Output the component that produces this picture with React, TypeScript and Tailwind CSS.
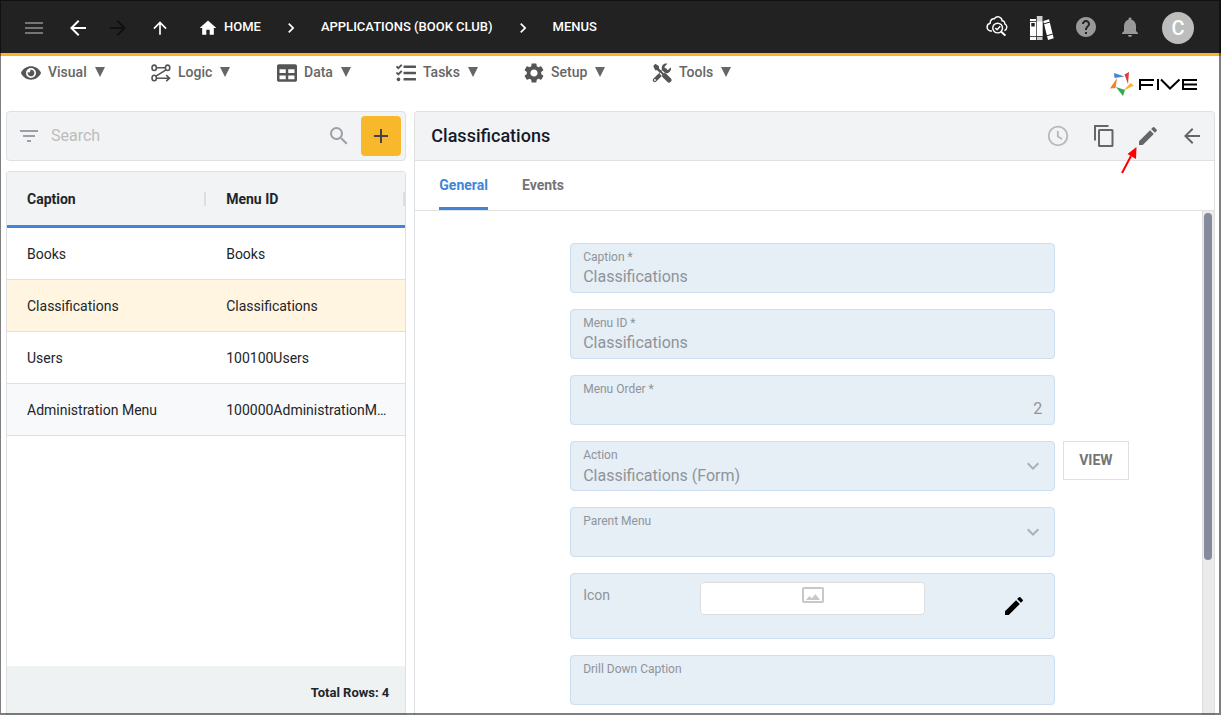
import React, { useState } from "react";
import {
  MdAdd,
  MdArrowBack,
  MdArrowForward,
  MdArrowUpward,
  MdChevronRight,
  MdEdit,
  MdFilterList,
  MdHelp,
  MdHome,
  MdKeyboardArrowDown,
  MdMenu,
  MdNotifications,
  MdSearch,
  MdSettings,
} from "react-icons/md";
import { FaEye, FaTable, FaTasks } from "react-icons/fa";

interface MenuRow {
  caption: string;
  menuId: string;
}

const ROWS: MenuRow[] = [
  { caption: "Books", menuId: "Books" },
  { caption: "Classifications", menuId: "Classifications" },
  { caption: "Users", menuId: "100100Users" },
  { caption: "Administration Menu", menuId: "100000AdministrationMenu" },
];

const MENUS = [
  { label: "Visual", icon: <FaEye className="size-5" />, width: "w-[130px]" },
  { label: "Logic", icon: <LogicIcon />, width: "w-[126px]" },
  { label: "Data", icon: <FaTable className="size-5" />, width: "w-[119px]" },
  { label: "Tasks", icon: <FaTasks className="size-5" />, width: "w-[128px]" },
  { label: "Setup", icon: <MdSettings className="size-6 shrink-0" />, width: "w-[128px]" },
  { label: "Tools", icon: <ToolsIcon />, width: "w-[128px]" },
];

export default function App() {
  return (
    <div className="relative flex h-screen flex-col overflow-hidden bg-white font-[Roboto,sans-serif] text-sm text-[#212529]">
      <TopBar />
      <MenuBar />
      <main className="grid min-h-0 flex-1 grid-cols-[minmax(0,1fr)_minmax(0,2fr)] gap-2 px-1.5">
        <ListPanel />
        <DetailPanel />
      </main>
      <div className="pointer-events-none absolute inset-0 border-t border-r-2 border-b-2 border-l border-black/50" />
    </div>
  );
}

function TopBar() {
  return (
    <header className="flex h-14 shrink-0 items-center justify-between border-b-3 border-[#fbb429] bg-[#222222] pt-0.5 pr-[27px] pl-[22px] text-white">
      <div className="flex items-center">
        <button aria-label="Menu" className="mr-5 text-[#757575]">
          <MdMenu className="size-6" />
        </button>
        <button aria-label="Back" className="mr-4">
          <MdArrowBack className="size-6" />
        </button>
        <button aria-label="Forward" disabled className="mr-5 text-[#111111]">
          <MdArrowForward className="size-6" />
        </button>
        <button aria-label="Up" className="mr-7">
          <MdArrowUpward className="size-5" />
        </button>
        <nav aria-label="Breadcrumb" className="flex items-center text-[13px] font-medium">
          <a href="#home" className="flex items-center gap-1.5">
            <MdHome className="size-5" />
            HOME
          </a>
          <MdChevronRight className="mx-5 size-5" />
          <a href="#applications">APPLICATIONS (BOOK CLUB)</a>
          <MdChevronRight className="mx-5 size-5" />
          <a href="#menus">MENUS</a>
        </nav>
      </div>
      <div className="flex items-center">
        <button aria-label="Inspect cloud" className="mr-5 pb-1">
          <CloudSearchIcon />
        </button>
        <button aria-label="Library" className="mr-5">
          <BooksIcon />
        </button>
        <button aria-label="Help" className="mr-5 pb-0.5 text-[#999999]">
          <MdHelp className="size-6" />
        </button>
        <button aria-label="Notifications" className="mr-5 pb-0.5 text-[#999999]">
          <MdNotifications className="size-6" />
        </button>
        <button className="flex size-8 items-center justify-center rounded-full bg-[#bdbdbd] text-xl font-medium text-white">
          C
        </button>
      </div>
    </header>
  );
}

function MenuBar() {
  return (
    <div className="flex h-[55px] shrink-0 items-start justify-between pr-[23px] pl-[21px]">
      <nav className="flex text-[#666666]">
        {MENUS.map((menu) => (
          <button key={menu.label} className={`flex h-8 items-center gap-[7px] font-medium ${menu.width}`}>
            <span className="flex w-5 shrink-0 justify-center pt-0.5 text-[#555555]">{menu.icon}</span>
            <span className="flex items-center gap-2">
              {menu.label}
              <svg viewBox="0 0 10 10" className="size-2.5 fill-current">
                <path d="M0 0h10L5 10z" />
              </svg>
            </span>
          </button>
        ))}
      </nav>
      <FiveLogo />
    </div>
  );
}

function ListPanel() {
  const [selected, setSelected] = useState("Classifications");

  return (
    <section className="flex min-h-0 flex-col gap-2.5">
      <div className="flex h-[50px] shrink-0 items-center rounded border border-[#dee0e2] bg-[#f1f3f4] pr-1 pl-2.5">
        <button aria-label="Filter" className="text-[#9aa0a6]">
          <MdFilterList className="size-6" />
        </button>
        <input
          type="text"
          aria-label="Search"
          placeholder="Search"
          className="ml-2.5 min-w-0 flex-1 bg-transparent text-base outline-none placeholder:text-[#bdbdbd]"
        />
        <MdSearch className="mr-2.5 size-6 text-[#9aa0a6]" />
        <button
          aria-label="Add"
          className="flex size-10 items-center justify-center rounded bg-[#f8b82b] text-[#444444]"
        >
          <MdAdd className="size-6" />
        </button>
      </div>

      <div className="flex min-h-0 flex-1 flex-col justify-between overflow-hidden rounded-t border border-b-0 border-[#dee0e2]">
        <table className="w-full table-fixed border-separate border-spacing-0 text-left">
          <thead>
            <tr className="bg-[#f1f3f4]">
              <HeaderCell>Caption</HeaderCell>
              <HeaderCell>Menu ID</HeaderCell>
            </tr>
          </thead>
          <tbody>
            {ROWS.map((row, i) => (
              <tr
                key={row.menuId}
                onClick={() => setSelected(row.caption)}
                className={`cursor-pointer ${
                  row.caption === selected ? "bg-[#fff5e1]" : i % 2 ? "bg-[#f8f9fa]" : "bg-white"
                }`}
              >
                <td className="h-[52px] truncate border-b border-[#e0e0e0] px-5">{row.caption}</td>
                <td className="h-[52px] truncate border-b border-[#e0e0e0] pr-3 pl-5">{row.menuId}</td>
              </tr>
            ))}
          </tbody>
        </table>
        <footer className="h-[49px] shrink-0 bg-[#eef2f3] px-4 pt-[17px] text-right text-[13px] leading-5 font-bold">
          Total Rows: 4
        </footer>
      </div>
    </section>
  );
}

function HeaderCell({ children }: { children: React.ReactNode }) {
  return (
    <th className="h-14 border-b-3 border-[#4285d8] pl-5 font-bold">
      <div className="flex items-center justify-between">
        {children}
        <span className="h-3.5 w-0.5 bg-[#dcdee0]" />
      </div>
    </th>
  );
}

function DetailPanel() {
  return (
    <section className="flex min-h-0 flex-col rounded-t border border-b-0 border-[#dee0e2]">
      <div className="flex h-[49px] shrink-0 items-center justify-between rounded-t border-b border-[#dee0e2] bg-[#f1f3f4] pr-2.5 pl-4">
        <h1 className="text-lg font-medium text-[#14192b]">Classifications</h1>
        <div className="flex items-center gap-5 text-[#666666]">
          <button aria-label="History" disabled className="pr-0.5 text-[#b5b8ba]">
            <ClockIcon />
          </button>
          <button aria-label="Copy">
            <CopyIcon />
          </button>
          <button aria-label="Edit" className="relative">
            <MdEdit className="size-6" />
            <PointerArrow />
          </button>
          <button aria-label="Close">
            <MdArrowBack className="size-6" />
          </button>
        </div>
      </div>

      <div
        role="tablist"
        className="flex h-[50px] shrink-0 gap-[34px] border-b border-[#dee0e2] px-6 font-bold"
      >
        <button
          role="tab"
          aria-selected="true"
          className="rounded-t-xs border-b-3 border-[#4285d8] pt-0.5 text-[#4285d8]"
        >
          General
        </button>
        <button role="tab" aria-selected="false" className="border-b-3 border-transparent pt-0.5 text-[#757575]">
          Events
        </button>
      </div>

      <div className="flex min-h-0 flex-1">
        <form className="grid flex-1 grid-cols-[155fr_485fr_147fr] content-start gap-y-4 overflow-hidden pt-8 text-[#8f9499]">
          <TextField id="caption" label="Caption *" value="Classifications" />
          <TextField id="menu-id" label="Menu ID *" value="Classifications" />
          <TextField id="menu-order" label="Menu Order *" value="2" alignRight />
          <SelectField id="action" label="Action" value="Classifications (Form)" />
          <div className="pl-2">
            <button
              type="button"
              className="h-[39px] border border-[#dee0e2] px-[15px] pb-0.5 font-bold text-[#757575]"
            >
              VIEW
            </button>
          </div>
          <SelectField id="parent-menu" label="Parent Menu" value="" />
          <div className="col-start-2 flex h-[66px] justify-between rounded border border-[#cbdff1] bg-[#e6eef6] px-3">
            <span className="w-[117px] pt-[11px]">Icon</span>
            <div className="mt-2 flex h-[33px] w-[225px] justify-center rounded border border-[#dedede] bg-white pt-1 text-[#c8c8c8]">
              <ImageIcon />
            </div>
            <div className="flex w-[117px] items-center justify-end pr-4">
              <button type="button" aria-label="Edit icon" className="text-black">
                <MdEdit className="size-6" />
              </button>
            </div>
          </div>
          <TextField id="drill-down" label="Drill Down Caption" value="" />
        </form>
        <div aria-hidden="true" className="w-3 shrink-0 border-l border-[#dcdcdc] bg-[#ebebeb] pt-0.5 pl-px">
          <div className="h-[347px] w-2 rounded-full bg-[#858a9c]" />
        </div>
      </div>
    </section>
  );
}

interface FieldProps {
  id: string;
  label: string;
  value: string;
  alignRight?: boolean;
}

function TextField({ id, label, value, alignRight }: FieldProps) {
  return (
    <div className="col-start-2 flex h-[50px] flex-col rounded border border-[#cbdff1] bg-[#e6eef6] px-3 pt-[5px]">
      <label htmlFor={id} className="text-xs leading-4">
        {label}
      </label>
      <input
        id={id}
        readOnly
        defaultValue={value}
        className={`h-6 w-full bg-transparent text-base outline-none ${alignRight ? "text-right" : ""}`}
      />
    </div>
  );
}

function SelectField({ id, label, value }: FieldProps) {
  return (
    <div className="relative col-start-2 flex h-[50px] flex-col rounded border border-[#cbdff1] bg-[#e6eef6] px-3 pt-[5px]">
      <label htmlFor={id} className="text-xs leading-4">
        {label}
      </label>
      <select
        id={id}
        disabled
        defaultValue={value}
        className="h-[26px] w-full appearance-none bg-transparent text-base opacity-100 outline-none"
      >
        <option value={value}>{value}</option>
      </select>
      <MdKeyboardArrowDown className="absolute top-3 right-[9px] size-6 text-[#a9b0b8]" />
    </div>
  );
}

function PointerArrow() {
  return (
    <svg viewBox="0 0 18 28" className="pointer-events-none absolute top-[22px] -left-[17px] h-7 w-[18px]">
      <path d="M3 27L12 10" stroke="#ff0000" strokeWidth="2" />
      <path d="M17.500 1L17 13L8.500 8z" fill="#ff0000" />
    </svg>
  );
}

function LogicIcon() {
  return (
    <svg viewBox="0 0 20 18" className="h-[18px] w-5 shrink-0 fill-none stroke-current" strokeWidth="1.600">
      <ellipse cx="3.200" cy="3.800" rx="2.200" ry="2.700" />
      <ellipse cx="16.600" cy="3.800" rx="2.200" ry="2.700" />
      <ellipse cx="3.200" cy="14" rx="2.200" ry="2.700" />
      <path d="M5.400 3.800h9M15 5.800L5 12.200M5.400 14.200h12.600M15.200 11.200l3.300 3-3.300 3" />
    </svg>
  );
}

function ToolsIcon() {
  return (
    <svg viewBox="0 0 20 20" className="size-5 shrink-0">
      <path
        d="M2.800 17.200L13 7"
        className="fill-none stroke-current"
        strokeWidth="4"
        strokeLinecap="round"
      />
      <path
        d="M18.900 4.300l-3 2.700-2.700-.6-.7-2.600L15.400.8C12.600 0 9.600 2 9.700 5.500c.1 3.300 3.400 5.400 6.300 4.400 2.400-.9 3.500-3.300 2.900-5.600z"
        className="fill-current"
      />
      <path d="M1.200 3L3.400.8 7 3.200v2.200l3.600 3.600-1.800 1.800-3.600-3.600H3.200z" className="fill-current" />
      <path d="M9 9l3.500 3.500" className="stroke-white" strokeWidth="4.500" />
      <path d="M8.500 8.500l3.500 3.500" className="stroke-current" strokeWidth="1.800" />
      <path d="M12.700 12.700l4.300 4.300" className="stroke-current" strokeWidth="5" strokeLinecap="round" />
      <circle cx="3" cy="17" r="0.900" fill="#ffffff" />
    </svg>
  );
}

function CloudSearchIcon() {
  return (
    <svg viewBox="0 0 24 24" className="size-[22px] fill-none stroke-current" strokeWidth="1.600">
      <path d="M6.500 17.500H5.200A4.200 4.200 0 0 1 1.200 13.200c0-2.200 1.400-3.700 3.300-4.200C4.600 5.300 6.800 3.800 9 4.200 10.200 2 12.200 1.500 14 2c2.200.6 3.400 2.300 3.600 4.200 2 .1 3 1.500 2.900 3.400 1.500.7 2.300 2 2.200 3.800-.1 1.700-1 3-2.600 3.700" />
      <circle cx="12.700" cy="14.200" r="5.300" />
      <path d="M10.200 14.200l1.900 1.900 3.400-3.700" />
      <path d="M16.600 18.200l4.600 4.300" strokeWidth="2.200" />
    </svg>
  );
}

function BooksIcon() {
  return (
    <svg viewBox="0 0 26 26" className="size-[26px]">
      <path d="M2 4h6v21H2z" fill="#ffffff" />
      <path d="M3.300 8h3.400v3.500H3.300z" fill="#222222" />
      <path d="M2 6.500h6M2 21.500h6" stroke="#222222" strokeWidth="0.800" />
      <path d="M8.800 1h5.700v24H8.800z" fill="#cfcfcf" />
      <path d="M8.800 6.500h5.700v14.500H8.800z" fill="#ffffff" />
      <path d="M8.800 21.500h5.700" stroke="#222222" strokeWidth="0.800" />
      <path d="M15.300 6l5.700-1.700 4.700 19-5.700 1.700z" fill="#ffffff" />
      <path d="M15.900 8.800l6-1.700M18.700 20.800l6-1.700" stroke="#222222" strokeWidth="1" />
    </svg>
  );
}

function ClockIcon() {
  return (
    <svg viewBox="0 0 24 24" className="size-6 fill-none stroke-current" strokeWidth="1.800">
      <circle cx="12" cy="12" r="9.300" />
      <path d="M11.800 7v5.500l4.300 2.600" />
    </svg>
  );
}

function CopyIcon() {
  return (
    <svg viewBox="0 0 24 24" className="size-6 fill-none stroke-current" strokeWidth="2">
      <path d="M3 16.500V2h13.500" />
      <rect x="7" y="6" width="13.500" height="16" rx="0.500" />
    </svg>
  );
}

function ImageIcon() {
  return (
    <svg viewBox="0 0 22 16" className="h-4 w-[22px]">
      <rect x="1" y="1" width="20" height="14" rx="1" className="fill-none stroke-current" strokeWidth="2" />
      <path d="M4 13l3.500-4 2.300 2.200L13.500 7l4.500 6z" className="fill-current" />
    </svg>
  );
}

function FiveLogo() {
  return (
    <svg viewBox="0 0 88 26" role="img" aria-label="Five" className="mt-[15px] h-[26px] w-[88px]">
      <path d="M4 2l10.500 3.500-10 1.500z" fill="#4285d8" />
      <path d="M14.500 3.500l4.500-2.500-1 12z" fill="#e03c3c" />
      <path d="M24 14.500l-11 5.500 7.500-8z" fill="#fbb429" />
      <path d="M6 16l9 3-2 6z" fill="#34a853" />
      <path d="M7 7L5.500 17 0 17.500z" fill="#f57c2a" />
      <g className="fill-none stroke-black" strokeWidth="2">
        <path d="M44 9H30V19M30 14h13M48 8V19M51 8.500l9 9 9.500-9M87 9H73V18h14M73 13.500h14" />
      </g>
    </svg>
  );
}
